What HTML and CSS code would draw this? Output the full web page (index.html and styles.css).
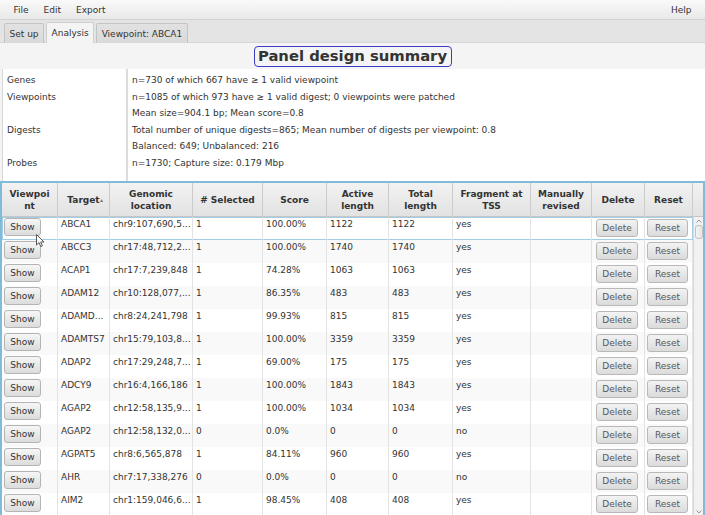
FILE: index.html
```html
<!DOCTYPE html>
<html>
<head>
<meta charset="utf-8">
<link rel="stylesheet" href="styles.css">
</head>
<body>
<div class="app">
  <div class="menubar">
    <span class="menu">File</span><span class="menu">Edit</span><span class="menu">Export</span>
    <span class="spacer"></span>
    <span class="menu">Help</span>
  </div>
  <div class="tabbar">
    <div class="tab">Set up</div>
    <div class="tab active">Analysis</div>
    <div class="tab">Viewpoint: ABCA1</div>
  </div>
  <div class="content">
    <div class="titlerow"><div class="title">Panel design summary</div></div>
    <div class="summary">
      <div class="sum-labels">
        <div class="sum-cell">Genes</div>
        <div class="sum-cell">Viewpoints</div>
        <div class="sum-cell"></div>
        <div class="sum-cell">Digests</div>
        <div class="sum-cell"></div>
        <div class="sum-cell">Probes</div>
      </div>
      <div class="sum-values">
        <div class="sum-cell">n=730 of which 667 have ≥ 1 valid viewpoint</div>
        <div class="sum-cell">n=1085 of which 973 have ≥ 1 valid digest; 0 viewpoints were patched</div>
        <div class="sum-cell">Mean size=904.1 bp; Mean score=0.8</div>
        <div class="sum-cell">Total number of unique digests=865; Mean number of digests per viewpoint: 0.8</div>
        <div class="sum-cell">Balanced: 649; Unbalanced: 216</div>
        <div class="sum-cell">n=1730; Capture size: 0.179 Mbp</div>
      </div>
    </div>
    <div class="table">
      <div class="thead">
        <div class="th">Viewpoi<br>nt</div>
        <div class="th">Target<span class="sort">▴</span></div>
        <div class="th">Genomic<br>location</div>
        <div class="th"># Selected</div>
        <div class="th">Score</div>
        <div class="th">Active<br>length</div>
        <div class="th">Total<br>length</div>
        <div class="th">Fragment at<br>TSS</div>
        <div class="th">Manually<br>revised</div>
        <div class="th">Delete</div>
        <div class="th">Reset</div>
        <div class="th filler"></div>
      </div>
      <div class="tbody-wrap">
        <div class="tbody">
          <div class="tr focused">
            <div class="td btncell"><span class="btn">Show</span></div><div class="td">ABCA1</div><div class="td">chr9:107,690,5...</div><div class="td">1</div><div class="td">100.00%</div><div class="td">1122</div><div class="td">1122</div><div class="td">yes</div><div class="td"></div><div class="td del"><span class="btn light w42">Delete</span></div><div class="td rst"><span class="btn light w41">Reset</span></div>
          </div>
          <div class="tr">
            <div class="td btncell"><span class="btn">Show</span></div><div class="td">ABCC3</div><div class="td">chr17:48,712,2...</div><div class="td">1</div><div class="td">100.00%</div><div class="td">1740</div><div class="td">1740</div><div class="td">yes</div><div class="td"></div><div class="td del"><span class="btn light w42">Delete</span></div><div class="td rst"><span class="btn light w41">Reset</span></div>
          </div>
          <div class="tr">
            <div class="td btncell"><span class="btn">Show</span></div><div class="td">ACAP1</div><div class="td">chr17:7,239,848</div><div class="td">1</div><div class="td">74.28%</div><div class="td">1063</div><div class="td">1063</div><div class="td">yes</div><div class="td"></div><div class="td del"><span class="btn light w42">Delete</span></div><div class="td rst"><span class="btn light w41">Reset</span></div>
          </div>
          <div class="tr">
            <div class="td btncell"><span class="btn">Show</span></div><div class="td">ADAM12</div><div class="td">chr10:128,077,...</div><div class="td">1</div><div class="td">86.35%</div><div class="td">483</div><div class="td">483</div><div class="td">yes</div><div class="td"></div><div class="td del"><span class="btn light w42">Delete</span></div><div class="td rst"><span class="btn light w41">Reset</span></div>
          </div>
          <div class="tr">
            <div class="td btncell"><span class="btn">Show</span></div><div class="td">ADAMD...</div><div class="td">chr8:24,241,798</div><div class="td">1</div><div class="td">99.93%</div><div class="td">815</div><div class="td">815</div><div class="td">yes</div><div class="td"></div><div class="td del"><span class="btn light w42">Delete</span></div><div class="td rst"><span class="btn light w41">Reset</span></div>
          </div>
          <div class="tr">
            <div class="td btncell"><span class="btn">Show</span></div><div class="td">ADAMTS7</div><div class="td">chr15:79,103,8...</div><div class="td">1</div><div class="td">100.00%</div><div class="td">3359</div><div class="td">3359</div><div class="td">yes</div><div class="td"></div><div class="td del"><span class="btn light w42">Delete</span></div><div class="td rst"><span class="btn light w41">Reset</span></div>
          </div>
          <div class="tr">
            <div class="td btncell"><span class="btn">Show</span></div><div class="td">ADAP2</div><div class="td">chr17:29,248,7...</div><div class="td">1</div><div class="td">69.00%</div><div class="td">175</div><div class="td">175</div><div class="td">yes</div><div class="td"></div><div class="td del"><span class="btn light w42">Delete</span></div><div class="td rst"><span class="btn light w41">Reset</span></div>
          </div>
          <div class="tr">
            <div class="td btncell"><span class="btn">Show</span></div><div class="td">ADCY9</div><div class="td">chr16:4,166,186</div><div class="td">1</div><div class="td">100.00%</div><div class="td">1843</div><div class="td">1843</div><div class="td">yes</div><div class="td"></div><div class="td del"><span class="btn light w42">Delete</span></div><div class="td rst"><span class="btn light w41">Reset</span></div>
          </div>
          <div class="tr">
            <div class="td btncell"><span class="btn">Show</span></div><div class="td">AGAP2</div><div class="td">chr12:58,135,9...</div><div class="td">1</div><div class="td">100.00%</div><div class="td">1034</div><div class="td">1034</div><div class="td">yes</div><div class="td"></div><div class="td del"><span class="btn light w42">Delete</span></div><div class="td rst"><span class="btn light w41">Reset</span></div>
          </div>
          <div class="tr">
            <div class="td btncell"><span class="btn">Show</span></div><div class="td">AGAP2</div><div class="td">chr12:58,132,0...</div><div class="td">0</div><div class="td">0.0%</div><div class="td">0</div><div class="td">0</div><div class="td">no</div><div class="td"></div><div class="td del"><span class="btn light w42">Delete</span></div><div class="td rst"><span class="btn light w41">Reset</span></div>
          </div>
          <div class="tr">
            <div class="td btncell"><span class="btn">Show</span></div><div class="td">AGPAT5</div><div class="td">chr8:6,565,878</div><div class="td">1</div><div class="td">84.11%</div><div class="td">960</div><div class="td">960</div><div class="td">yes</div><div class="td"></div><div class="td del"><span class="btn light w42">Delete</span></div><div class="td rst"><span class="btn light w41">Reset</span></div>
          </div>
          <div class="tr">
            <div class="td btncell"><span class="btn">Show</span></div><div class="td">AHR</div><div class="td">chr7:17,338,276</div><div class="td">0</div><div class="td">0.0%</div><div class="td">0</div><div class="td">0</div><div class="td">no</div><div class="td"></div><div class="td del"><span class="btn light w42">Delete</span></div><div class="td rst"><span class="btn light w41">Reset</span></div>
          </div>
          <div class="tr">
            <div class="td btncell"><span class="btn">Show</span></div><div class="td">AIM2</div><div class="td">chr1:159,046,6...</div><div class="td">1</div><div class="td">98.45%</div><div class="td">408</div><div class="td">408</div><div class="td">yes</div><div class="td"></div><div class="td del"><span class="btn light w42">Delete</span></div><div class="td rst"><span class="btn light w41">Reset</span></div>
          </div>
        </div>
        <div class="vscroll">
          <svg class="arrow" width="8" height="6" viewBox="0 0 8 6"><path d="M1.5 4.5 L4 2 L6.5 4.5" fill="none" stroke="#9a9a9a" stroke-width="1"/></svg>
          <div class="thumb"></div>
          <div class="track"></div>
          <svg class="arrow" width="8" height="6" viewBox="0 0 8 6"><path d="M1.5 1.5 L4 4 L6.5 1.5" fill="none" stroke="#9a9a9a" stroke-width="1"/></svg>
        </div>
      </div>
    </div>
  </div>
  <svg class="cursor" width="10" height="14" viewBox="0 0 10 14"><path d="M0.5 0.5 L0.5 11 L3 8.6 L4.8 12.6 L6.4 11.9 L4.7 8 L8 8 Z" fill="#fff" stroke="#555" stroke-width="1" stroke-linejoin="round"/></svg>
</div>
</body>
</html>
```

FILE: styles.css
```css
* { box-sizing: border-box; }
html, body { margin: 0; padding: 0; }
body {
  width: 705px;
  height: 515px;
  overflow: hidden;
  font-family: "DejaVu Sans", "Liberation Sans", sans-serif;
  font-size: 9px;
  color: #333;
  background: #f4f4f4;
}
.app {
  position: relative;
  width: 705px;
  height: 515px;
  display: flex;
  flex-direction: column;
}
.menubar {
  height: 20px;
  flex: none;
  display: flex;
  align-items: center;
  padding: 0 6px;
  background: linear-gradient(#f9f9f9, #e9e9e9);
  border-bottom: 1px solid #d2d2d2;
}
.menu { padding: 0 7.5px; color: #333; }
.spacer { flex: 1; }
.tabbar {
  height: 23px;
  flex: none;
  display: flex;
  align-items: flex-end;
  gap: 2px;
  padding-left: 4px;
  background: #e4e4e4;
  border-bottom: 1px solid #d6d6d6;
}
.tab {
  height: 20px;
  padding: 0 4.5px;
  display: flex;
  align-items: center;
  background: linear-gradient(#e2e2e2, #d9d9d9);
  border: 1px solid #c4c4c4;
  border-bottom: none;
  border-radius: 2px 2px 0 0;
  color: #333;
  margin-bottom: -1px;
}
.tab.active {
  background: #f4f4f4;
  border-color: #cfcfcf;
  height: 21px;
}
.content {
  flex: 1;
  display: flex;
  flex-direction: column;
  min-height: 0;
}
.titlerow {
  height: 26px;
  flex: none;
  display: flex;
  justify-content: center;
  align-items: center;
  padding-top: 1px;
}
.title {
  font-size: 14.8px;
  font-weight: bold;
  color: #333;
  border: 1.5px solid #3b3bc4;
  border-radius: 4px;
  padding: 0 2px;
  height: 21px;
  line-height: 18px;
  width: 198px;
  text-align: center;
}
.summary {
  height: 112px;
  flex: none;
  display: flex;
  margin-left: 2px;
  background: #fff;
  border-left: 1px solid #d6d6d6;
  padding-top: 3px;
}
.sum-labels {
  width: 125px;
  border-right: 2px solid #dcdcdc;
  margin-top: -3px;
  padding-top: 3px;
}
.sum-values { flex: 1; }
.sum-cell {
  height: 16.6px;
  line-height: 16.6px;
  padding-left: 4px;
  white-space: nowrap;
  overflow: hidden;
}
.table {
  flex: 1;
  min-height: 0;
  display: flex;
  flex-direction: column;
  border: 2px solid #80bcd9;
  border-bottom: none;
  background: #fff;
}
.thead, .tr {
  display: grid;
  grid-template-columns: 56px 52px 83px 70px 64px 62px 64px 78px 61px 53px 48px;
}
.thead {
  grid-template-columns: 56px 52px 83px 70px 64px 62px 64px 78px 61px 53px 48px 10px;
  height: 34px;
  flex: none;
  background: linear-gradient(#f2f2f2, #e2e2e2);
  border-bottom: 1px solid #c6c6c6;
}
.th {
  display: flex;
  align-items: center;
  justify-content: center;
  text-align: center;
  font-weight: bold;
  line-height: 12px;
  border-right: 1px solid #cbcbcb;
  color: #333;
  position: relative;
}
.th.filler { border-right: none; }
.sort {
  position: absolute;
  right: 6px;
  top: 11px;
  font-size: 6px;
  color: #777;
}
.tbody-wrap {
  flex: 1;
  min-height: 0;
  display: flex;
}
.tbody {
  width: 691px;
  overflow: hidden;
}
.tr {
  height: 23px;
  background: #fff;
}
.tr:nth-child(even) { background: #f9f9f9; }
.tr.focused { box-shadow: inset 0 0 0 1px #a3cde6; }
.td {
  border-right: 1px solid #e3e3e3;
  padding: 1px 3px 0;
  line-height: 12px;
  white-space: nowrap;
  overflow: hidden;
  color: #333;
}
.tr.focused .td:last-child { border-right: none; }
.td.btncell { padding: 1px 0 0 2px; }
.td.del { padding: 2px 0 0 4px; }
.td.rst { padding: 2px 0 0 2px; }
.btn {
  display: inline-flex;
  align-items: center;
  justify-content: center;
  width: 37px;
  height: 18px;
  border: 1px solid #b4b4b4;
  border-radius: 3px;
  background: linear-gradient(#f6f6f6, #dcdcdc);
  color: #333;
}
.btn.light { color: #585858; border-color: #b8b8b8; background: linear-gradient(#f3f3f3, #dbdbdb); }
.btn.w42 { width: 42px; }
.btn.w41 { width: 41px; }
.vscroll {
  width: 10px;
  display: flex;
  flex-direction: column;
  align-items: center;
  background: #f1f1f1;
  border-left: 1px solid #dadada;
  padding-top: 1px;
}
.arrow { flex: none; }
.thumb {
  width: 8px;
  height: 14px;
  margin-top: 1px;
  border: 1px solid #c2c2c2;
  border-radius: 3px;
  background: linear-gradient(90deg, #f4f4f4, #e3e3e3);
}
.track { flex: 1; }
.cursor {
  position: absolute;
  left: 36px;
  top: 234px;
}
```
